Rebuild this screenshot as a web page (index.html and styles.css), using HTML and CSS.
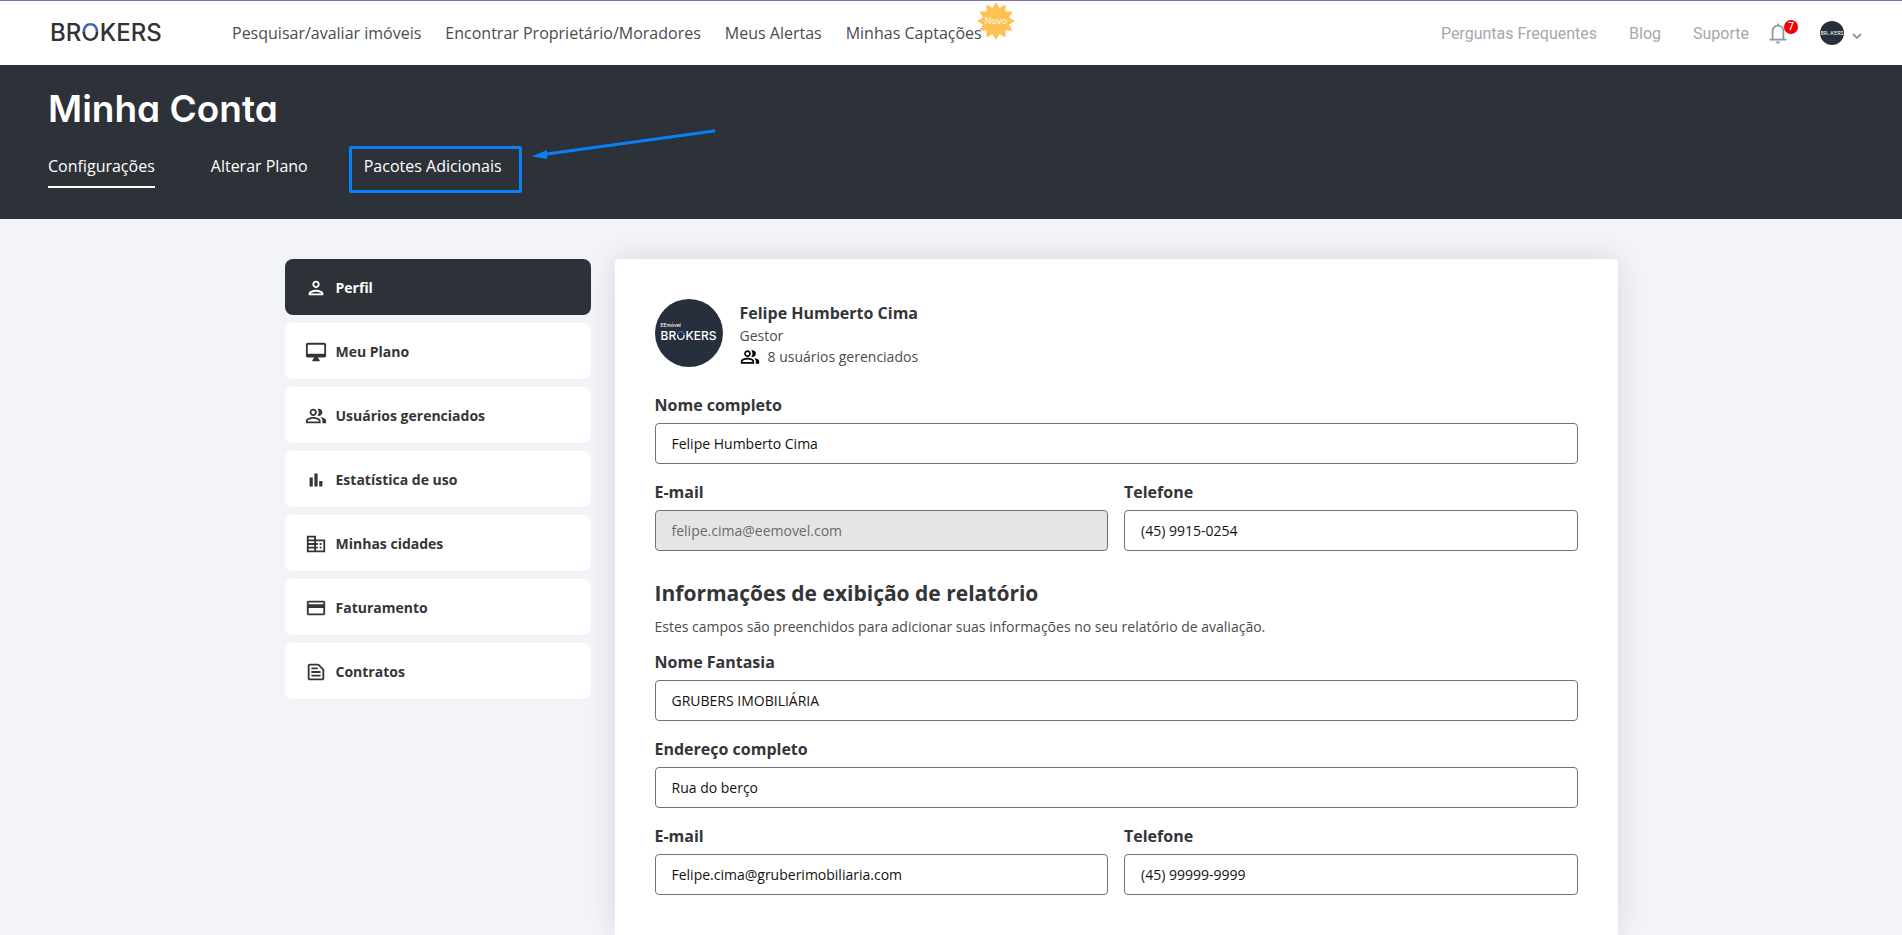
FILE: index.html
```html
<!DOCTYPE html>
<html lang="pt-BR">
<head>
  <meta charset="utf-8">
  <meta name="viewport" content="width=device-width, initial-scale=1">
  <title>Minha Conta</title>
  <link rel="stylesheet" href="styles.css">
</head>
<body>
  <header class="topbar">
    <a class="logo" href="#">BR<span class="logo-ring">O</span>KERS</a>
    <nav class="main-nav">
      <a href="#">Pesquisar/avaliar imóveis</a>
      <a href="#">Encontrar Proprietário/Moradores</a>
      <a href="#">Meus Alertas</a>
      <a class="has-star" href="#">Minhas Captações
        <span class="star">
          <svg viewBox="0 0 40 40" aria-hidden="true"><polygon fill="#fec154" points="20,1 23.5,7 29.5,3.5 29.5,10.5 36.5,10.5 33,16.5 39,20 33,23.5 36.5,29.5 29.5,29.5 29.5,36.5 23.5,33 20,39 16.5,33 10.5,36.5 10.5,29.5 3.5,29.5 7,23.5 1,20 7,16.5 3.5,10.5 10.5,10.5 10.5,3.5 16.5,7"/></svg>
          <span class="star-text">Novo</span>
        </span>
      </a>
    </nav>
    <nav class="help-nav">
      <a href="#">Perguntas Frequentes</a>
      <a href="#">Blog</a>
      <a href="#">Suporte</a>
    </nav>
    <button class="bell" type="button" aria-label="Notificações">
      <svg viewBox="0 0 18 21" aria-hidden="true"><path fill="none" stroke="#8f969f" stroke-width="1.8" d="M9 .5v2M3.600 16.500V8.300C3.600 4.800 6 2.600 9 2.600s5.400 2.200 5.400 5.700v8.200M.5 16.700h17"/><path fill="#8f969f" d="M6.800 18.500h4.400c-.2 1.200-1 2-2.200 2s-2-.8-2.200-2z"/></svg>
      <span class="count">7</span>
    </button>
    <button class="account" type="button" aria-label="Conta">
      <span class="avatar avatar-small"><span class="avatar-name">BR<span class="avatar-ring">O</span>KERS</span></span>
      <svg class="chevron" viewBox="0 0 10 7" aria-hidden="true"><path fill="none" stroke="#8f959d" stroke-width="1.800" d="M1 1l4 4 4-4"/></svg>
    </button>
  </header>

  <section class="hero">
    <h1>Minha Conta</h1>
    <nav class="tabs">
      <a class="tab tab-active" href="#">Configurações</a>
      <a class="tab" href="#">Alterar Plano</a>
      <a class="tab tab-marked" href="#">Pacotes Adicionais
        <svg class="arrow" viewBox="0 0 186 32" aria-hidden="true"><path stroke="#0a80f8" stroke-width="3" stroke-linecap="round" d="M16 25L183 2"/><path fill="#0a80f8" d="M1 27.500L16 21v9z"/></svg>
      </a>
    </nav>
  </section>

  <main class="content">
    <nav class="side">
      <a class="side-item side-active" href="#">
        <svg viewBox="0 0 24 24" aria-hidden="true"><path d="M12 6c1.100 0 2 .9 2 2s-.9 2-2 2-2-.9-2-2 .9-2 2-2m0 10c2.700 0 5.800 1.290 6 2H6c.23-.72 3.310-2 6-2m0-12C9.790 4 8 5.790 8 8s1.790 4 4 4 4-1.790 4-4-1.790-4-4-4zm0 10c-2.670 0-8 1.340-8 4v2h16v-2c0-2.660-5.330-4-8-4z"/></svg>
        Perfil</a>
      <a class="side-item" href="#">
        <svg viewBox="0 0 24 24" aria-hidden="true"><path d="M21 2H3c-1.100 0-2 .9-2 2v12c0 1.100.9 2 2 2h7l-2 3v1h8v-1l-2-3h7c1.100 0 2-.9 2-2V4c0-1.100-.9-2-2-2zm0 12H3V4h18v10z"/></svg>
        Meu Plano</a>
      <a class="side-item" href="#">
        <svg viewBox="0 0 24 24" aria-hidden="true"><path d="M16.670 13.130C18.040 14.060 19 15.320 19 17v3h4v-3c0-2.180-3.570-3.470-6.330-3.870zM15 12c2.210 0 4-1.790 4-4s-1.790-4-4-4c-.47 0-.91.1-1.330.24C14.500 5.270 15 6.580 15 8s-.5 2.730-1.330 3.760c.42.14.86.24 1.330.24zM9 12c2.210 0 4-1.790 4-4s-1.790-4-4-4-4 1.790-4 4 1.790 4 4 4zm0-6c1.100 0 2 .9 2 2s-.9 2-2 2-2-.9-2-2 .9-2 2-2zm0 7c-2.670 0-8 1.340-8 4v3h16v-3c0-2.660-5.330-4-8-4zm6 5H3v-.99C3.200 16.290 6.300 15 9 15s5.800 1.290 6 2v1z"/></svg>
        Usuários gerenciados</a>
      <a class="side-item" href="#">
        <svg viewBox="0 0 24 24" aria-hidden="true"><path d="M5 9.200h3.500V19H5zM10.250 5h3.500v14h-3.500zM15.500 13H19v6h-3.500z"/></svg>
        Estatística de uso</a>
      <a class="side-item" href="#">
        <svg viewBox="0 0 24 24" aria-hidden="true"><path d="M12 7V3H2v18h20V7H12zm-2 12H4v-2h6v2zm0-4H4v-2h6v2zm0-4H4V9h6v2zm0-4H4V5h6v2zm10 12h-8v-2h2v-2h-2v-2h2v-2h-2V9h8v10zm-2-8h-2v2h2v-2zm0 4h-2v2h2v-2z"/></svg>
        Minhas cidades</a>
      <a class="side-item" href="#">
        <svg viewBox="0 0 24 24" aria-hidden="true"><path d="M20 4H4c-1.110 0-1.990.89-1.990 2L2 18c0 1.110.89 2 2 2h16c1.110 0 2-.89 2-2V6c0-1.110-.89-2-2-2zm0 14H4v-6h16v6zm0-10H4V6h16v2z"/></svg>
        Faturamento</a>
      <a class="side-item" href="#">
        <svg viewBox="0 0 24 24" aria-hidden="true"><path d="M14.170 5L19 9.830V19H5V5h9.170m0-2H5c-1.100 0-2 .9-2 2v14c0 1.100.9 2 2 2h14c1.100 0 2-.9 2-2V9.830c0-.53-.21-1.040-.59-1.410l-4.830-4.830c-.37-.38-.88-.59-1.410-.59zM7 15h10v2H7v-2zm0-4h10v2H7v-2zm0-4h7v2H7V7z"/></svg>
        Contratos</a>
    </nav>

    <form class="card">
      <div class="profile">
        <span class="avatar avatar-large"><span class="avatar-tag">EEmóvel</span><span class="avatar-name">BR<span class="avatar-ring">O</span>KERS</span></span>
        <div class="profile-text">
          <strong class="profile-name">Felipe Humberto Cima</strong>
          <span class="profile-role">Gestor</span>
          <span class="profile-users">
            <svg viewBox="0 0 24 24" aria-hidden="true"><path d="M16.670 13.130C18.040 14.060 19 15.320 19 17v3h4v-3c0-2.180-3.570-3.470-6.330-3.870zM15 12c2.210 0 4-1.790 4-4s-1.790-4-4-4c-.47 0-.91.1-1.330.24C14.500 5.270 15 6.580 15 8s-.5 2.730-1.330 3.760c.42.14.86.24 1.330.24zM9 12c2.210 0 4-1.790 4-4s-1.790-4-4-4-4 1.790-4 4 1.790 4 4 4zm0-6c1.100 0 2 .9 2 2s-.9 2-2 2-2-.9-2-2 .9-2 2-2zm0 7c-2.670 0-8 1.340-8 4v3h16v-3c0-2.660-5.330-4-8-4zm6 5H3v-.99C3.200 16.290 6.300 15 9 15s5.800 1.290 6 2v1z"/></svg>
            8 usuários gerenciados</span>
        </div>
      </div>

      <div class="fields">
        <div class="field field-wide"><label for="nome">Nome completo</label><input id="nome" type="text" value="Felipe Humberto Cima"></div>
        <div class="field"><label for="email">E-mail</label><input id="email" type="text" value="felipe.cima@eemovel.com" disabled></div>
        <div class="field"><label for="fone">Telefone</label><input id="fone" type="text" value="(45) 9915-0254"></div>
      </div>

      <h2>Informações de exibição de relatório</h2>
      <p class="hint">Estes campos são preenchidos para adicionar suas informações no seu relatório de avaliação.</p>

      <div class="fields">
        <div class="field field-wide"><label for="fantasia">Nome Fantasia</label><input id="fantasia" type="text" value="GRUBERS IMOBILIÁRIA"></div>
        <div class="field field-wide"><label for="endereco">Endereço completo</label><input id="endereco" type="text" value="Rua do berço"></div>
        <div class="field"><label for="email2">E-mail</label><input id="email2" type="text" value="Felipe.cima@gruberimobiliaria.com"></div>
        <div class="field"><label for="fone2">Telefone</label><input id="fone2" type="text" value="(45) 99999-9999"></div>
      </div>
    </form>
  </main>
</body>
</html>
```

FILE: styles.css
```css
* {
  box-sizing: border-box;
}

html {
  height: 100%;
}

body {
  display: flex;
  flex-direction: column;
  min-height: 100%;
  margin: 0;
  background: #f3f4f9;
  color: #333539;
  font-family: "Open Sans", "Noto Sans", sans-serif;
  font-size: 14px;
}

a {
  color: inherit;
  text-decoration: none;
}

button {
  padding: 0;
  border: 0;
  background: none;
}

svg {
  display: block;
}

/* Top bar */
.topbar {
  display: flex;
  align-items: center;
  height: 65px;
  padding: 0 40px 0 50px;
  border-top: 1px solid #8570a6;
  background: #fff;
}

.logo {
  width: 182px;
  font-family: Inter, "Open Sans", sans-serif;
  font-size: 24px;
  font-weight: 500;
  line-height: 32px;
  color: #333;
}

.logo-ring {
  background: linear-gradient(#3b68b0 50%, #333 50%);
  background-clip: text;
  -webkit-background-clip: text;
  color: transparent;
}

.main-nav {
  display: flex;
  gap: 24px;
  color: #4a4c50;
  font-size: 16px;
  line-height: 24px;
}

.has-star {
  position: relative;
}

.star {
  position: absolute;
  left: 100%;
  top: -20px;
  width: 40px;
  margin-left: -6px;
}

.star-text {
  position: absolute;
  inset: 0;
  color: #fff3d9;
  font-family: Inter, sans-serif;
  font-size: 9px;
  font-weight: 500;
  line-height: 40px;
  text-align: center;
}

.help-nav {
  display: flex;
  gap: 32px;
  margin-left: auto;
  padding-top: 2px;
  color: #a3a8ae;
  font-family: Roboto, sans-serif;
  font-size: 16px;
  line-height: 24px;
}

.bell {
  position: relative;
  width: 18px;
  margin-left: 20px;
}

.count {
  position: absolute;
  top: -3px;
  left: 15px;
  width: 14px;
  border-radius: 50%;
  background: #f50000;
  color: #fff;
  font-family: Roboto, sans-serif;
  font-size: 10px;
  font-weight: 500;
  line-height: 14px;
  text-align: center;
}

.account {
  display: flex;
  align-items: center;
  gap: 8px;
  margin-left: 33px;
}

.chevron {
  width: 10px;
  margin-top: 6px;
}

.avatar {
  display: flex;
  flex-direction: column;
  align-items: center;
  justify-content: center;
  flex: none;
  border-radius: 50%;
  background: #272e3c;
  color: #fff;
  font-family: Inter, sans-serif;
}

.avatar-small {
  width: 24px;
  height: 24px;
  font-size: 5px;
}

.avatar-large {
  width: 68px;
  height: 68px;
  font-size: 12px;
  font-weight: 500;
  line-height: 15px;
}

.avatar-tag {
  align-self: flex-start;
  padding-left: 6px;
  font-size: 5px;
  line-height: 5px;
}

.avatar-ring {
  background: linear-gradient(#3b68b0 50%, #fff 50%);
  background-clip: text;
  -webkit-background-clip: text;
  color: transparent;
}

/* Page heading */
.hero {
  padding: 20px 48px 31px;
  background: #2d3138;
  color: #fff;
}

h1 {
  margin: 0 0 21px;
  font-family: Inter, sans-serif;
  font-size: 37px;
  font-weight: 600;
  font-feature-settings: "cv11";
  line-height: 48px;
}

.tabs {
  display: flex;
  gap: 56px;
  font-size: 16px;
  line-height: 24px;
}

.tab {
  position: relative;
  padding-bottom: 8px;
  border-bottom: 2px solid transparent;
}

.tab-active {
  border-color: #fff;
}

.tab-marked::after {
  content: "";
  position: absolute;
  inset: -8px -20px -7px -15px;
  border: 3px solid #0a80f8;
  border-radius: 2px;
}

.arrow {
  position: absolute;
  left: 100%;
  top: -25px;
  width: 186px;
  margin-left: 29px;
}

/* Body */
.content {
  display: grid;
  grid-template-columns: 306px 1fr;
  gap: 24px;
  flex: 1;
  width: 100%;
  max-width: 1333px;
  margin: 0 auto;
  padding-top: 40px;
}

.side {
  display: flex;
  flex-direction: column;
  gap: 8px;
}

.side-item {
  display: flex;
  align-items: center;
  gap: 9px;
  height: 56px;
  padding: 1px 20px 0;
  border-radius: 8px;
  background: #fff;
  font-weight: 700;
  line-height: 20px;
}

.side-item svg {
  width: 22px;
  fill: currentColor;
}

.side-active {
  background: #2d3138;
  color: #fff;
}

.card {
  padding: 40px 40px 39px;
  border-radius: 4px 4px 0 0;
  background: #fff;
  box-shadow: 0 0 30px rgba(0, 0, 0, 0.12);
}

.profile {
  display: flex;
  align-items: flex-end;
  gap: 17px;
  margin-bottom: 26px;
}

.profile-text {
  display: flex;
  flex-direction: column;
  color: #4a4c50;
}

.profile-name {
  color: #333539;
  font-size: 16px;
  font-weight: 700;
  line-height: 24px;
}

.profile-role {
  line-height: 22px;
}

.profile-users {
  display: flex;
  align-items: center;
  gap: 8px;
  line-height: 20px;
}

.profile-users svg {
  width: 20px;
  fill: #000;
}

.fields {
  display: grid;
  grid-template-columns: 1fr 1fr;
  gap: 16px;
}

.field {
  display: flex;
  flex-direction: column;
  gap: 6px;
}

.field-wide {
  grid-column: 1 / -1;
}

label {
  font-size: 16px;
  font-weight: 700;
  line-height: 24px;
}

input {
  width: 100%;
  height: 41px;
  padding: 0 16px;
  border: 1px solid #6c737d;
  border-radius: 4px;
  background: #fff;
  color: #111;
  font-family: inherit;
  font-size: 14px;
}

input:disabled {
  background: #e5e5e5;
  color: #6a6a6a;
}

h2 {
  margin: 28px 0 10px;
  font-size: 21px;
  font-weight: 700;
  line-height: 28px;
}

.hint {
  margin: 0 0 13px;
  color: #4a4c50;
  line-height: 20px;
}
```
